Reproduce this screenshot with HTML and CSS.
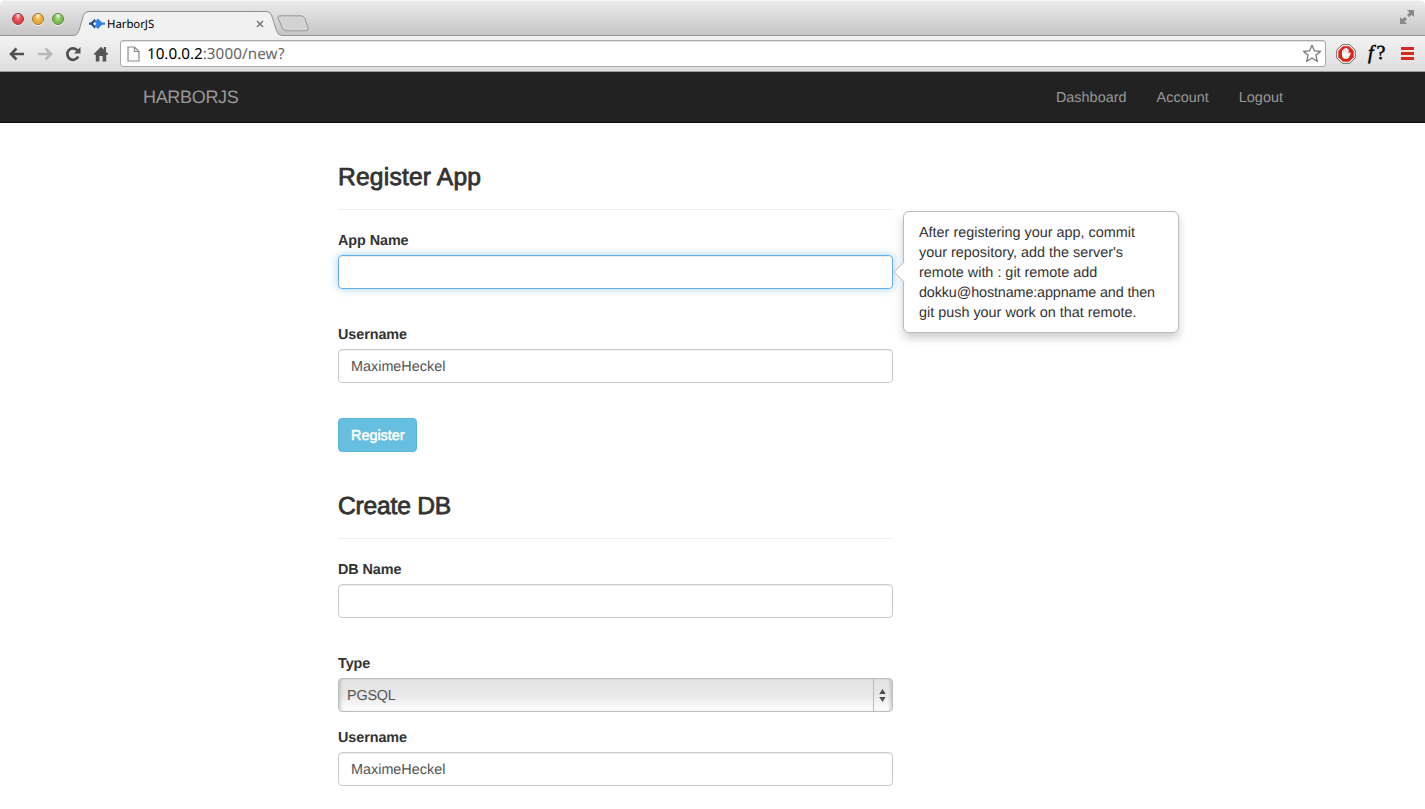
FILE: index.html
```html
<!DOCTYPE html>
<html lang="en">
<head>
<meta charset="utf-8">
<title>HarborJS</title>
<link rel="stylesheet" href="styles.css">
</head>
<body>
<div class="window">
  <div class="tabstrip">
    <div class="lights"><span class="light red"></span><span class="light amber"></span><span class="light green"></span></div>
    <div class="tab">
      <svg class="tab-shape" width="210" height="26" viewBox="0 0 210 26">
        <path d="M0 25.500C5 25 5 23 6.500 19L10.500 5Q12 1.500 16 1.500H193Q197 1.500 198.500 5L203 19C204.500 23.500 205 25 210 25.500V26H0Z" fill="#f1f1f1"/>
        <path d="M0 25.500C5 25 5 23 6.500 19L10.500 5Q12 1.500 16 1.500H193Q197 1.500 198.500 5L203 19C204.500 23.500 205 25 210 25.500" fill="none" stroke="#909090"/>
      </svg>
      <svg class="favicon" width="16" height="12" viewBox="0 0 16 12"><path d="M5.500 1L2 4.600H0V6.800H2L5.500 10.500L7 9L4 5.800L7 2.500Z" fill="#244e8c"/><path d="M9 .5L13 4.600H16V6.800H13L9 11L5.800 7.800L7.300 5.800L5.800 3.700Z" fill="#2e82ea"/></svg>
      <span class="tab-title">HarborJS</span>
      <svg class="tab-close" width="8" height="8" viewBox="0 0 8 8"><path d="M1 1L7 7M7 1L1 7" stroke="#777" stroke-width="1.500"/></svg>
    </div>
    <svg class="new-tab" width="34" height="18" viewBox="0 0 34 18"><path d="M5 .8H25Q28 .8 29 3.500L32 13Q32.800 15.800 30 15.800H11Q7.500 15.800 6.300 13L2 3Q1.200 .8 5 .8Z" fill="#d3d3d3" stroke="#979797"/></svg>
    <svg class="expand" width="16" height="16" viewBox="0 0 16 16"><path d="M8 1H15V8L12.700 5.700L10.200 8.200L8 6L10.400 3.500ZM1 8L3.300 10.200L5.800 7.800L8 10L5.600 12.600L8 15H1Z" fill="#898989"/></svg>
  </div>
  <div class="toolbar">
    <svg class="tool back" width="16" height="14" viewBox="0 0 16 14"><path d="M7.500 1.500L2 7L7.500 12.500M2 7H15" fill="none" stroke="#505050" stroke-width="2.600"/></svg>
    <svg class="tool forward" width="16" height="14" viewBox="0 0 16 14"><path d="M8.500 1.500L14 7L8.500 12.500M14 7H1" fill="none" stroke="#b9b9b9" stroke-width="2.600"/></svg>
    <svg class="tool reload" width="16" height="16" viewBox="0 0 16 16"><path d="M12.500 4.500A5.700 5.700 0 1 0 13.200 10.500" fill="none" stroke="#505050" stroke-width="2.700"/><path d="M15.500 1V7.500H9Z" fill="#505050"/></svg>
    <svg class="tool home" width="16" height="16" viewBox="0 0 16 16"><path d="M.8 8L8 .8L10.800 3.600V1H13V5.800L15.200 8L14 9.200L13.200 8.500V15.500H9.600V10H6.400V15.500H2.800V8.500L2 9.200Z" fill="#555"/></svg>
    <div class="address">
      <svg class="page-icon" width="13" height="16" viewBox="0 0 13 16"><path d="M1 1H7.500L12 5.500V15H1ZM7.500 1V5.500H12" fill="#fafafa" stroke="#8c8c8c" stroke-width="1.200"/></svg>
      <span class="url">10.0.0.2<span class="path">:3000/new?</span></span>
      <svg class="star" width="20" height="19" viewBox="0 0 20 19"><path d="M10 1.200L12.400 6.800L18.600 7.300L13.900 11.300L15.400 17.300L10 14L4.600 17.300L6.100 11.300L1.400 7.300L7.600 6.800Z" fill="#fff" stroke="#777" stroke-width="1.250" stroke-linejoin="round"/></svg>
    </div>
    <svg class="stop" width="20" height="20" viewBox="0 0 20 20"><path d="M6.200 .7H13.800L19.300 6.200V13.800L13.800 19.300H6.200L.7 13.800V6.200Z" fill="#fff" stroke="#666"/><path d="M6.800 2.300H13.200L17.700 6.800V13.200L13.200 17.700H6.800L2.300 13.200V6.800Z" fill="#df2318"/><path d="M6 10V6.500Q7 5.500 7.500 6.500V5Q8.500 4 9.200 5V4.200Q10.200 3.300 11 4.200V5Q12 4.200 12.600 5.200V10L13.800 8.600Q15 8.400 14.600 9.800L12.500 14Q12 15 10 15Q6.300 15 6 11.500Z" fill="#fff"/><path d="M7.700 6V9M9.400 5V9M11.100 5V9" stroke="#e9a29d" stroke-width=".5"/></svg>
    <span class="whatfont"><i>f</i>?</span>
    <div class="menu"><span></span><span></span><span></span></div>
  </div>
  <nav class="navbar">
    <span class="brand">HARBORJS</span>
    <div class="links"><span>Dashboard</span><span>Account</span><span>Logout</span></div>
  </nav>
  <main class="form">
    <section>
      <h3>Register App</h3>
      <div class="field gap">
        <label>App Name</label>
        <div class="control focused">
          <div class="popover"><svg class="arrow" width="12" height="22" viewBox="0 0 12 22"><path d="M12 0L1 11L12 22Z" fill="#fff"/><path d="M11.500 .8L1 11L11.500 21.200" fill="none" stroke="#bbb"/></svg>After registering your app, commit<br>your repository, add the server's<br>remote with : git remote add<br><span class="host-line">dokku@hostname:appname and then</span><br>git push your work on that remote.</div>
        </div>
      </div>
      <div class="field gap"><label>Username</label><div class="control">MaximeHeckel</div></div>
      <div class="register">Register</div>
    </section>
    <section>
      <h3 class="db-title">Create DB</h3>
      <div class="field gap"><label>DB Name</label><div class="control"></div></div>
      <div class="field"><label>Type</label><div class="control select"><span>PGSQL</span><span class="stepper"><svg width="7" height="13" viewBox="0 0 7 13"><path d="M3.500 0L6.700 5H.3ZM.3 8H6.700L3.500 13Z" fill="#4c4c4c"/></svg></span></div></div>
      <div class="field"><label>Username</label><div class="control">MaximeHeckel</div></div>
    </section>
  </main>
</div>
</body>
</html>
```
FILE: styles.css
```css
* { box-sizing: border-box; }
body { margin: 0; background: #fff; color: #333; font: 14.400px/20px "Liberation Sans", Arial, sans-serif; letter-spacing: 0; text-rendering: geometricPrecision; }
svg { display: block; flex: none; }
.window { height: 809px; overflow: hidden; border-radius: 5px; }
.tabstrip { height: 36px; display: flex; align-items: flex-start; background: linear-gradient(#ececec, #e0e0e0 30%, #c5c5c5); border-top: 1px solid #f5f5f5; border-bottom: 1px solid #959595; }
.lights { display: flex; gap: 8px; padding: 12px 0 0 12px; width: 74px; flex: none; }
.light { width: 12px; height: 12px; border-radius: 50%; border: 1px solid; box-shadow: 0 1px 0 #f5f5f5; }
.red { background: radial-gradient(ellipse at 50% 15%, #fff 0, #ee6f70 28%, #d83a3e 65%, #ff9c96); border-color: #a63a3a; }
.amber { background: radial-gradient(ellipse at 50% 15%, #fff 0, #f5c266 28%, #e5a132 65%, #ffef91); border-color: #a77631; }
.green { background: radial-gradient(ellipse at 50% 15%, #fff 0, #a4d77d 28%, #70b548 65%, #d4f99d); border-color: #5a873f; }
.tab { position: relative; width: 203px; height: 26px; margin-top: 9px; display: flex; align-items: center; padding: 2px 0 0 15px; flex: none; color: #000; font: 11.400px "Noto Sans", sans-serif; letter-spacing: -.05px; }
.tab-shape { position: absolute; left: -1px; top: 0; }
.favicon, .tab-title, .tab-close { position: relative; }
.tab-title { margin-left: 2px; flex: 1; }
.tab-close { margin-right: 13px; }
.new-tab { margin: 14px 0 0 -1px; }
.expand { margin: 8px 10px 0 auto; }
.toolbar { height: 36px; display: flex; align-items: center; background: linear-gradient(#f2f2f2, #dedede); border-bottom: 1px solid #9a9d9d; padding-left: 9px; }
.tool { margin-right: 12px; }
.home { margin-right: 11px; }
.address { width: 1206px; height: 27px; display: flex; align-items: center; background: #fff; border: 1px solid #aaa; border-radius: 3px; padding: 0 3px 0 6px; box-shadow: inset 0 1px 1px #ddd; }
.url { margin-left: 7px; flex: 1; font: 15.200px/24px "Noto Sans", sans-serif; color: #000; letter-spacing: 0; }
.path { color: #666; letter-spacing: .1px; }
.stop { margin-left: 10px; }
.whatfont { width: 23px; margin: -2px 0 0 12px; color: #000; font: 20px/24px "Liberation Serif", serif; letter-spacing: 3px; white-space: nowrap; -webkit-text-stroke: .5px #000; }
.menu { margin-left: 10px; display: grid; gap: 2px; }
.menu span { width: 13px; height: 3px; background: #d9291f; }
.navbar { height: 51px; background: #222; border-bottom: 1px solid #080808; padding: 0 142px 0 143px; display: flex; align-items: center; justify-content: space-between; color: #999; }
.brand { font-size: 18px; letter-spacing: -.32px; }
.links { display: flex; gap: 30px; letter-spacing: .03px; padding-top: 2px; }
.form { width: 555px; margin-left: 338px; padding-top: 40px; }
section + section { padding-top: 40px; }
h3 { height: 47px; margin: 0 0 20px; padding-top: 1px; border-bottom: 1px solid #eee; font-size: 24.600px; line-height: 27px; font-weight: 400; letter-spacing: .2px; -webkit-text-stroke: .8px #333; }
.db-title { letter-spacing: -.2px; }
.field { height: 74px; }
.gap { height: 94px; }
label { display: block; height: 25px; padding-top: 1px; font-weight: 700; letter-spacing: -.08px; }
.control { position: relative; height: 34px; border: 1px solid #ccc; border-radius: 4px; padding: 7px 12px 5px; color: #555; box-shadow: inset 0 1px 1px rgba(0,0,0,.075); }
.focused { border-color: #66afe9; box-shadow: inset 0 1px 1px rgba(0,0,0,.075), 0 0 8px rgba(102,175,233,.6); }
.popover { position: absolute; left: 564px; top: -45px; width: 276px; height: 122px; padding: 11px 15px 9px; color: #333; background: #fff; border: 1px solid #bbb; border-radius: 6px; box-shadow: 0 5px 10px rgba(0,0,0,.2); white-space: nowrap; }
.host-line { letter-spacing: -.14px; }
.arrow { position: absolute; left: -11px; top: 49px; }
.register { width: 79px; height: 34px; padding: 7px 12px 5px; color: #fff; background: #66bfe1; border: 1px solid #5bb5da; border-radius: 4px; -webkit-text-stroke: .5px #fff; }
.select { display: flex; padding: 0 0 0 8px; line-height: 34px; letter-spacing: -.2px; justify-content: space-between; background: linear-gradient(#e3e3e3, #e8e8e8 50%, #fefefe); border-color: #bfbfbf; box-shadow: inset 3px 0 3px -1px rgba(0,0,0,.15), inset -3px 0 3px -1px rgba(0,0,0,.15); }
.stepper { width: 19px; height: 32px; padding-right: 1px; border-left: 1px solid #bbb; display: grid; place-items: center; }
```
